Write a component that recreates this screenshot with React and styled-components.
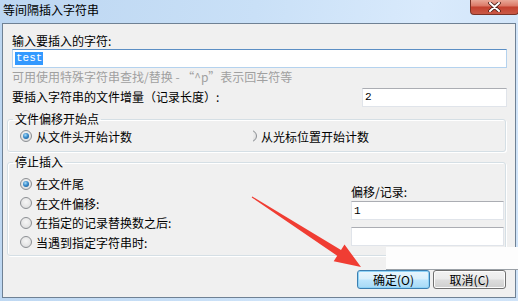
import React from 'react';
import styled, { createGlobalStyle } from 'styled-components';

const GlobalStyle = createGlobalStyle`
  html, body {
    margin: 0;
    padding: 0;
    background: #fff;
  }
  body {
    font-family: "Noto Sans CJK SC", "Liberation Sans", sans-serif;
    font-size: 12px;
    color: #000;
  }
`;

const Window = styled.div`
  position: relative;
  width: 518px;
  height: 301px;
  overflow: hidden;
  display: flex;
  flex-direction: column;
  background: linear-gradient(100deg, #bcd6f1 0%, #c9e0f7 45%, #d9eafc 75%, #cfe3f8 100%);
`;

const TitleBar = styled.div`
  height: 23px;
  display: flex;
  justify-content: space-between;
  align-items: flex-start;
  flex-shrink: 0;
`;

const Title = styled.div`
  padding: 3px 0 0 3px;
  line-height: 14px;
  font-size: 12px;
`;

const CloseButton = styled.div`
  width: 49px;
  height: 15px;
  box-sizing: border-box;
  border: 1px solid #7a3226;
  border-top: none;
  border-radius: 0 0 4px 4px;
  background: linear-gradient(#e9a898 0%, #dc7b69 40%, #c4412f 52%, #c95946 100%);
  display: flex;
  align-items: center;
  justify-content: center;
  margin-right: -1px;
`;

const Panel = styled.div`
  flex: 1;
  margin: 0 2px 3px 2px;
  background: #f0f0f0;
  border: 1px solid #6f8194;
  padding: 10px 8px 0 4px;
  display: flex;
  flex-direction: column;
`;

const Label = styled.div`
  line-height: 14px;
  height: 14px;
  white-space: nowrap;
  color: ${(p) => (p.muted ? '#a0a0a0' : '#000')};
  margin-top: ${(p) => p.top || 0}px;
  padding-left: ${(p) => p.indent || 0}px;
`;

const TextBox = styled.div`
  box-sizing: border-box;
  height: 19px;
  width: ${(p) => (p.w ? `${p.w}px` : 'auto')};
  margin-top: ${(p) => p.top || 0}px;
  margin-left: ${(p) => p.indent || 0}px;
  background: #fff;
  border: 1px solid ${(p) => (p.focused ? '#b4d2ee' : '#e0e4ea')};
  border-top-color: ${(p) => (p.focused ? '#5b8ec4' : '#abadb3')};
  display: flex;
  align-items: center;
  padding-left: 2px;
  font-family: "Liberation Mono", "DejaVu Sans Mono", monospace;
  font-size: 11px;
  flex-shrink: 0;
`;

const Selected = styled.span`
  background: #3399ff;
  color: #fff;
  line-height: 13px;
  padding: 0 1px;
`;

const FieldRow = styled.div`
  display: flex;
  align-items: center;
  justify-content: space-between;
  margin-top: 3px;
  padding-left: 5px;
  height: 20px;
`;

const Group = styled.fieldset`
  margin: ${(p) => p.top}px 1px 0 0;
  padding: ${(p) => p.pad};
  border: 1px solid #d5dfe5;
  border-radius: 3px;
  box-shadow: inset 1px 1px 0 #fff, 1px 1px 0 #fff;
  min-width: 0;
`;

const Legend = styled.legend`
  padding: 0 2px;
  margin-left: -7px;
  line-height: 14px;
  font-size: 12px;
`;

const OptionRow = styled.div`
  display: flex;
  align-items: center;
  margin-top: 2px;
  height: 16px;
`;

const Option = styled.label`
  display: flex;
  align-items: center;
  gap: 4px;
  height: ${(p) => p.h || 16}px;
  width: ${(p) => (p.w ? `${p.w}px` : 'auto')};
  white-space: nowrap;
`;

const Radio = styled.span`
  position: relative;
  width: 12px;
  height: 12px;
  box-sizing: border-box;
  border-radius: 50%;
  border: 1px solid #8c8f93;
  background: radial-gradient(circle at 50% 40%, #f6f6f6 0%, #e6e6e6 55%, #cfd1d4 100%);
  flex-shrink: 0;
  clip-path: ${(p) => (p.clipped ? 'inset(0 0 0 8px)' : 'none')};

  &::after {
    content: '';
    display: ${(p) => (p.checked ? 'block' : 'none')};
    position: absolute;
    left: 2px;
    top: 2px;
    width: 6px;
    height: 6px;
    border-radius: 50%;
    background: radial-gradient(circle at 40% 35%, #a8dcf8 0%, #3b8ccc 45%, #0f4d86 100%);
  }
`;

const StopGrid = styled.div`
  display: grid;
  grid-template-columns: 1fr 153px;
`;

const OptionList = styled.div`
  display: flex;
  flex-direction: column;
  padding-top: 5px;
`;

const SideColumn = styled.div`
  display: flex;
  flex-direction: column;
  padding-top: 16px;
`;

const ButtonRow = styled.div`
  display: flex;
  justify-content: flex-end;
  gap: 3px;
  margin: 14px 1px 0 0;
`;

const Button = styled.div`
  width: 73px;
  height: 19px;
  box-sizing: border-box;
  border-radius: 3px;
  border: 1px solid ${(p) => (p.primary ? '#3c7fb1' : '#707070')};
  background: ${(p) =>
    p.primary
      ? 'linear-gradient(#eaf6fd 0%, #d9f0fc 48%, #bee6fd 52%, #a7d9f5 100%)'
      : 'linear-gradient(#f2f2f2 0%, #ebebeb 48%, #dddddd 52%, #cfcfcf 100%)'};
  box-shadow: ${(p) => (p.primary ? 'inset 0 0 0 1px #8fd3f7' : 'inset 0 0 0 1px #fcfcfc')};
  display: flex;
  align-items: center;
  justify-content: center;
  line-height: 14px;
`;

const Overlay = styled.svg`
  position: absolute;
  left: 0;
  top: 0;
  pointer-events: none;
`;

const Patch = styled.div`
  position: absolute;
  left: 386px;
  top: 247px;
  width: 132px;
  height: 22px;
  background: #fdfdfd;
  border-bottom: 1px solid #9aa0a6;
`;

export default function App() {
  return (
    <>
      <GlobalStyle />
      <Window>
        <TitleBar>
          <Title>等间隔插入字符串</Title>
          <CloseButton>
            <svg width="13" height="10" viewBox="0 0 13 10">
              <path d="M2 1 L11 9 M11 1 L2 9" stroke="#4a1c14" strokeWidth="3.6" strokeLinecap="round" />
              <path d="M2 1 L11 9 M11 1 L2 9" stroke="#fff" strokeWidth="2" strokeLinecap="round" />
            </svg>
          </CloseButton>
        </TitleBar>

        <Panel>
          <Label indent={5}>输入要插入的字符:</Label>
          <TextBox focused top={1} indent={5}>
            <Selected>test</Selected>
          </TextBox>
          <Label muted top={2} indent={5}>可用使用特殊字符串查找/替换 - “^p”表示回车符等</Label>

          <FieldRow>
            <Label>要插入字符串的文件增量（记录长度）:</Label>
            <TextBox w={145}>2</TextBox>
          </FieldRow>

          <Group top={5} pad="0 8px 7px 12px">
            <Legend>文件偏移开始点</Legend>
            <OptionRow>
              <Option w={225}>
                <Radio checked />
                从文件头开始计数
              </Option>
              <Option>
                <Radio clipped />
                从光标位置开始计数
              </Option>
            </OptionRow>
          </Group>

          <Group top={3} pad="0 1px 3px 12px">
            <Legend>停止插入</Legend>
            <StopGrid>
              <OptionList>
                <Option h={19.5}>
                  <Radio checked />
                  在文件尾
                </Option>
                <Option h={19.5}>
                  <Radio />
                  在文件偏移:
                </Option>
                <Option h={19.5}>
                  <Radio />
                  在指定的记录替换数之后:
                </Option>
                <Option h={19.5}>
                  <Radio />
                  当遇到指定字符串时:
                </Option>
              </OptionList>
              <SideColumn>
                <Label>偏移/记录:</Label>
                <TextBox top={2}>1</TextBox>
                <TextBox top={7} />
              </SideColumn>
            </StopGrid>
          </Group>

          <ButtonRow>
            <Button primary>确定(O)</Button>
            <Button>取消(C)</Button>
          </ButtonRow>
        </Panel>

        <Patch />

        <Overlay width="518" height="301" viewBox="0 0 518 301">
          <polygon
            points="252.3,196.6 341.0,249.9 344.5,244.5 361,267 333.7,261.3 337.2,255.8 251.7,197.4"
            fill="#f03d33"
          />
        </Overlay>
      </Window>
    </>
  );
}
